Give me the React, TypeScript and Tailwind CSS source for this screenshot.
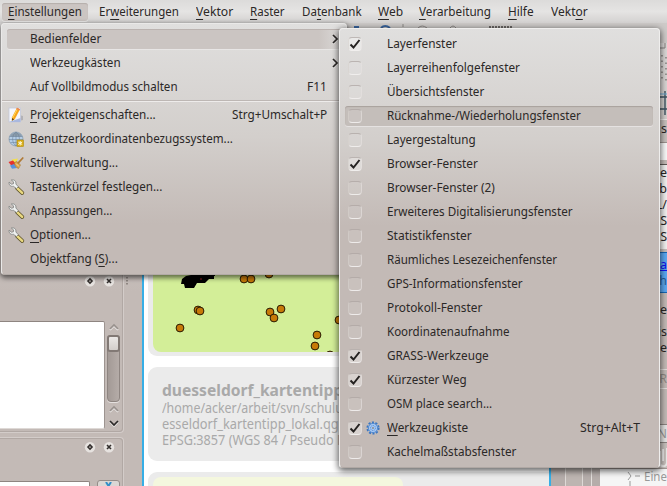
import { useLayoutEffect, useRef, type ReactNode } from "react";

const FONT = "font-['Noto_Sans','Open_Sans',sans-serif]";

/* Text squeezed horizontally to a given advance width. `&x` marks the mnemonic letter. */
function Fit({ text, w, className = "" }: { text: string; w: number; className?: string }) {
  const ref = useRef<HTMLSpanElement>(null);
  useLayoutEffect(() => {
    const apply = () => {
      const el = ref.current;
      if (el) el.style.transform = `scaleX(${w / el.offsetWidth})`;
    };
    apply();
    document.fonts.ready.then(apply);
  }, [w, text]);
  const i = text.indexOf("&");
  return (
    <span className="block shrink-0 whitespace-pre" style={{ width: w }}>
      <span ref={ref} className={`inline-block origin-left ${className}`}>
        {i < 0 ? (
          text
        ) : (
          <>
            {text.slice(0, i)}
            <span className="underline decoration-1 underline-offset-[3px] [text-decoration-skip-ink:none]">{text[i + 1]}</span>
            {text.slice(i + 2)}
          </>
        )}
      </span>
    </span>
  );
}

function NoteIcon() {
  return (
    <svg width="16" height="16" viewBox="0 0 16 16">
      <path d="M11 8l4 1v4l-4 1z" fill="#9d9da5" opacity=".6" />
      <rect x="1" y="1" width="11.5" height="14" fill="#f5f7fc" stroke="#c4c9da" strokeWidth=".8" />
      <path d="M1 15h11.5V11z" fill="#a9b8df" />
      <path d="M9 .8l3 1.4-5.2 10-2.9 1.5.1-3.4z" fill="#f8a51b" />
      <path d="M9.8 1.2l-5.3 10" stroke="#ffd95a" strokeWidth="1" />
      <path d="M9 .8l3 1.4-.7 1.3-3-1.4z" fill="#e8805c" />
      <path d="M4 11l-.2 2.8 2.4-1.3z" fill="#5b4320" />
    </svg>
  );
}

function GlobeIcon() {
  return (
    <svg width="16" height="16" viewBox="0 0 16 16">
      <circle cx="8" cy="8" r="7" fill="#b4cde6" stroke="#8196aa" strokeWidth=".7" />
      <path d="M1.5 5.5h13M1 8.5h14M2.5 11.5h11M8 1v14M8 1C3.500 4 3.500 12 8 15M8 1c4.500 3 4.500 11 0 14" fill="none" stroke="#6f879f" strokeWidth=".6" />
      <path d="M2 5.500Q3 2 8 1.500q5 .500 6 4z" fill="#6f7d88" opacity=".6" />
      <rect x="9" y="9" width="6.500" height="6.500" fill="#d8ac13" stroke="#b18c10" strokeWidth=".6" />
      <path d="M12.200 10v4.500M10.200 11l4 2.500M14.200 11l-4 2.500" stroke="#fff9db" strokeWidth="1" />
    </svg>
  );
}

function BrushIcon() {
  return (
    <svg width="16" height="16" viewBox="0 0 16 16">
      <path d="M4 4.500l6-1-3 6-4-1z" fill="#f4e04c" />
      <path d="M.5 7L5 5.500l3 3.500-4 2.500z" fill="#e5322e" />
      <path d="M2 10.500l4-1.500 3 4-5 .800z" fill="#5b92dc" />
      <path d="M6.500 7.500l2.500-1 3.500 3.500-2 3.500c-2-.5-4-3-4-6z" fill="#dba348" stroke="#a87b35" strokeWidth=".6" />
      <path d="M8 8.500l3 3" stroke="#f6dda0" />
      <path d="M10.300 7.800L14.800 3" stroke="#b07a35" strokeWidth="1.700" strokeLinecap="round" />
    </svg>
  );
}

function WrenchIcon() {
  return (
    <svg width="17" height="17" viewBox="0 0 17 17">
      <path d="M9 9l5.300 5" stroke="#5f542b" strokeWidth="3.800" strokeLinecap="round" />
      <path d="M9.200 9.100l5 4.800" stroke="#ead980" strokeWidth="2.400" strokeLinecap="round" />
      <path
        d="M1.100 3.100L3.400 5.200 5.400 4.800 5.600 2.900 3.300 1C6.200.2 8.400 2.200 7.900 5L10.300 7.700 8.400 9.600 5.300 7.200C3 8 .6 6 1.100 3.100z"
        fill="#f0f2f1" stroke="#7d807f" strokeWidth=".8"
      />
    </svg>
  );
}

function GearIcon() {
  return (
    <svg width="14" height="14" viewBox="0 0 14 14">
      <circle cx="7" cy="7" r="5.700" fill="none" stroke="#3c77c2" strokeWidth="1.800" strokeDasharray="2.100 1.481" />
      <circle cx="7" cy="7" r="4.600" fill="#a3c6f3" stroke="#4a86d0" strokeWidth=".9" />
      <circle cx="7" cy="7" r="2.500" fill="none" stroke="#4c86cd" strokeWidth=".8" strokeDasharray="1.200 .7" />
      <circle cx="7" cy="7" r="1" fill="#8b8c8e" />
    </svg>
  );
}

function Chevron({ d, light = false }: { d: "up" | "down" | "right"; light?: boolean }) {
  const path = d === "up" ? "M1 6l4-4 4 4" : d === "down" ? "M1 2l4 4 4-4" : "M3 0l4 4-4 4";
  return (
    <svg width="10" height="8" viewBox="0 0 10 8" className="overflow-visible">
      <path d={path} transform="translate(0 1)" fill="none" stroke="#efedec" strokeWidth="1.600" />
      <path d={path} fill="none" stroke={light ? "#98918d" : "#2b2827"} strokeWidth="1.700" />
    </svg>
  );
}

const bar: [string, number, number][] = [
  ["&Einstellungen", 74, 17],
  ["Er&weiterungen", 80, 17],
  ["&Vektor", 37, 17],
  ["&Raster", 35, 17],
  ["Da&tenbank", 60, 16],
  ["&Web", 25, 16],
  ["&Verarbeitung", 72, 17],
  ["&Hilfe", 25.500, 17],
  ["Vekt&or", 36.500, 0],
];

function MenuBar() {
  return (
    <div className="flex h-[23px] shrink-0 items-center bg-linear-to-b from-[#dcdbda] via-[#e5e4e3] to-[#d3d1d0] pl-[2px] text-[#2b2827]">
      {bar.map(([t, w, gap], i) => (
        <div
          key={i}
          className={i === 0 ? "h-[18px] rounded-[3px] bg-[#cbc5c2] px-[6px] shadow-[inset_0_1px_1px_#b5aeab,0_1px_0_#efeeed]" : "h-[18px]"}
          style={{ marginRight: i === 0 ? gap - 6 : gap }}
        >
          <Fit text={t} w={w} />
        </div>
      ))}
    </div>
  );
}

function MenuRow({ icon, label, w, keys, kw = 0, arrow, active }: {
  icon?: ReactNode; label: string; w: number; keys?: string; kw?: number; arrow?: boolean; active?: boolean;
}) {
  return (
    <div className="flex h-6 items-center pl-[5px]">
      <div
        className={`flex h-5 w-full items-center ${active ? "rounded-[3px] bg-linear-to-r from-[#cbc5c2] from-92% to-transparent shadow-[inset_0_1px_0_#bbb3b0,0_1px_0_#e8e6e5]" : ""}`}
      >
        <span className="flex w-[23px] shrink-0 items-center pl-px">{icon}</span>
        <Fit text={label} w={w} />
        {keys && <span className="mr-[19px] ml-auto"><Fit text={keys} w={kw} /></span>}
        {arrow && <span className="mr-[6px] ml-auto"><Chevron d="right" /></span>}
      </div>
    </div>
  );
}

function SettingsMenu() {
  return (
    <div className="absolute top-[23px] left-px h-[252px] w-[346px] rounded-[4px] border border-[#eae9e8] border-b-[#b2aaa6] bg-linear-to-b from-[#e0dfde] via-[#d3cfcc] via-45% to-[#c3bab6] to-80% pt-[3px] shadow-[0_2px_5px_1px_rgba(0,0,0,0.55)]">
      <MenuRow label="Bedienfelder" w={71} arrow active />
      <MenuRow label="Werkzeugkästen" w={91} arrow />
      <MenuRow label="Auf Vollbildmodus schalten" w={148} keys="F11" kw={20} />
      <div className="flex h-1 items-center">
        <div className="h-[2px] w-full border-t border-b border-t-[#bdb7b4] border-b-[#eeeceb]" />
      </div>
      <MenuRow icon={<NoteIcon />} label="&Projekteigenschaften..." w={126} keys="Strg+Umschalt+P" kw={95} />
      <MenuRow icon={<GlobeIcon />} label="Benutzerkoordinatenbezugssystem..." w={202.500} />
      <MenuRow icon={<BrushIcon />} label="Stilverwaltung..." w={88} />
      <MenuRow icon={<WrenchIcon />} label="Tastenkürzel festlegen..." w={132.500} />
      <MenuRow icon={<WrenchIcon />} label="Anpassungen..." w={82} />
      <MenuRow icon={<WrenchIcon />} label="&Optionen..." w={60.500} />
      <MenuRow label="Objektfang (&S)..." w={87.500} />
    </div>
  );
}

const panels: { t: string; w: number; on?: boolean; hot?: boolean; gear?: boolean }[] = [
  { t: "Layerfenster", w: 70, on: true },
  { t: "Layerreihenfolgefenster", w: 132.500 },
  { t: "Übersichtsfenster", w: 97 },
  { t: "Rücknahme-/Wiederholungsfenster", w: 193.500, hot: true },
  { t: "Layergestaltung", w: 88.500 },
  { t: "Browser-Fenster", w: 90.500, on: true },
  { t: "Browser-Fenster (2)", w: 107.500 },
  { t: "Erweiteres Digitalisierungsfenster", w: 186 },
  { t: "Statistikfenster", w: 84.500 },
  { t: "Räumliches Lesezeichenfenster", w: 170.500 },
  { t: "GPS-Informationsfenster", w: 135.500 },
  { t: "Protokoll-Fenster", w: 95.500 },
  { t: "Koordinatenaufnahme", w: 122.500 },
  { t: "GRASS-Werkzeuge", w: 101.500, on: true },
  { t: "Kürzester Weg", w: 80, on: true },
  { t: "OSM place search...", w: 105 },
  { t: "&Werkzeugkiste", w: 81, on: true, gear: true },
  { t: "Kachelmaßstabsfenster", w: 129 },
];

function CheckBox({ on }: { on?: boolean }) {
  return (
    <span className={`flex size-[14px] shrink-0 items-center justify-center rounded-[4px] border border-t-[#aaa3a0]/70 border-r-[#e5e2e0]/60 border-b-[#f2f0ef]/90 border-l-[#d5d0cd]/60 ${on ? "bg-white/35" : "bg-white/10"}`}>
      {on && (
        <svg width="12" height="12" viewBox="0 0 12 12" className="shrink-0">
          <path d="M1.500 6.500l3 3L10.500 2" fill="none" stroke="#252221" strokeWidth="2" />
        </svg>
      )}
    </span>
  );
}

function PanelsMenu() {
  return (
    <div className="absolute top-[28px] left-[339px] h-[440px] w-[321px] rounded-[4px] border border-[#efeeed] border-b-[#b0a8a4] bg-linear-to-b from-[#e0dfde] via-[#d3cfcc] via-25% to-[#c3bab6] to-45% pt-[3px] shadow-[0_2px_6px_1px_rgba(0,0,0,0.6)]">
      {panels.map((p) => (
        <div key={p.t} className="flex h-6 items-center px-[5px]">
          <div className={`flex h-5 w-[308px] items-center pl-[3px] ${p.hot ? "rounded-[3px] bg-[#c4beba] shadow-[inset_0_1px_1px_#a9a19d,0_1px_0_#e5e2e1]" : ""}`}>
            <CheckBox on={p.on} />
            <span className="flex w-[25px] shrink-0 items-center pl-[4px]">{p.gear && <GearIcon />}</span>
            <Fit text={p.t} w={p.w} />
            {p.gear && <span className="mr-[13px] ml-auto"><Fit text="Strg+Alt+T" w={60} /></span>}
          </div>
        </div>
      ))}
    </div>
  );
}

function DockButtons() {
  return (
    <div className="flex gap-[9px] pr-[9px]">
      {["M3 5l2-2 2 2-2 2z", "M3 3l4 4M7 3L3 7"].map((d) => (
        <svg key={d} width="10" height="10" viewBox="0 0 10 10" className="overflow-visible">
          <circle cx="5" cy="5.300" r="5.200" fill="#e6e2df" />
          <path d={d} fill="none" stroke="#332f2d" strokeWidth="1.600" />
        </svg>
      ))}
    </div>
  );
}

function LeftDock() {
  return (
    <div className="flex h-full w-[142px] shrink-0 flex-col">
      <div className="h-[410px] w-[124px] shrink-0 rounded-br-[4px] border-r border-b border-[#d3ccc9] shadow-[inset_-1px_-1px_0_#b1a8a4]">
        <div className="flex h-[298px] items-end justify-end pb-[35px]"><DockButtons /></div>
        <div className="flex h-[108px]">
          <div className="w-[105px] rounded-r-[2px] border-t border-r border-b border-t-[#8e8581] border-r-[#9d9490] border-b-[#ded9d6] bg-white" />
          <div className="ml-[2px] flex w-[13px] flex-col items-center">
            <div className="flex h-[14px] items-center pb-[2px]"><Chevron d="up" light /></div>
            <div className="h-[67px] w-[13px] rounded-[4px] border border-[#8e8581] bg-linear-to-r from-[#a39a96] to-[#b5acA8] shadow-[0_1px_0_#e5e1df]">
              <div className="-m-px h-[17px] w-[13px] rounded-[3px] border-2 border-[#827975] bg-linear-to-b from-[#ebe8e6] to-[#d3cecb]" />
            </div>
            <div className="flex h-[14px] items-center"><Chevron d="up" light /></div>
            <div className="flex h-[13px] items-center"><Chevron d="down" /></div>
          </div>
        </div>
      </div>
      <div className="mt-[4px] flex h-[60px] w-[124px] shrink-0 flex-col rounded-tr-[4px] border-t border-r border-[#d3ccc9] shadow-[inset_-1px_1px_0_#b1a8a4]">
        <div className="flex h-[42px] justify-end pt-[4px]"><DockButtons /></div>
        <div className="flex justify-between pr-[3px]">
          <div className="mt-px h-2 w-[90px] rounded-tr-[2px] border-t border-r border-[#8e8581] bg-white" />
          <div className="flex h-3 w-[23px] justify-center rounded-t-[3px] border border-[#958c88] bg-[#dbd7d4] pt-px">
            <svg width="7" height="6"><path d="M1 0l2.500 4L6 0" fill="none" stroke="#348fc8" strokeWidth="2" /></svg>
          </div>
        </div>
      </div>
    </div>
  );
}

/* Points of interest on the map thumbnail */
const dots = [[27, 64], [45, 46], [47, 47], [91, 15], [98, 15], [116, 10], [117, 48], [121, 54], [128, 45], [164, 71], [162, 82], [177, 91], [186, 56]];

function Center() {
  return (
    <div className="flex h-full w-[409px] shrink-0 flex-col overflow-hidden border-r-2 border-l-2 border-[#36aee6] bg-white pl-[4px]">
      <div className="h-[333px] shrink-0 rounded-l-[9px] bg-[#ebebeb] pt-[241px] pl-[5px]">
        <svg width="250" height="88" viewBox="0 0 250 88" className="rounded-bl-[8px] bg-[#d3ee98]">
          {dots.map(([x, y]) => (
            <circle key={`${x}-${y}`} cx={x} cy={y} r="3.900" fill="#c77a08" stroke="#271b05" strokeWidth="1" />
          ))}
          <path d="M29 15l4-3 5-1V9h24v3h-1v3h-5l-4 4h-8l-3 5h-9l-1-4h-3z" fill="#000" />
          <path d="M47 15h2" stroke="#972323" />
        </svg>
      </div>
      <div className="mt-[11px] h-[94px] shrink-0 rounded-l-[9px] bg-[#ebebeb] pt-[14px] pl-[14px] text-[13.5px] leading-4 text-[#a9a9a9]">
        <div className="h-[19px] leading-[19px]"><Fit text="duesseldorf_kartentipp" w={181} className="text-[15.5px] font-bold" /></div>
        <Fit text="/home/acker/arbeit/svn/schulu" w={181} />
        <Fit text="esseldorf_kartentipp_lokal.qg" w={177} />
        <Fit text="EPSG:3857 (WGS 84 / Pseudo M" w={186} />
      </div>
      <div className="mt-[11px] h-8 shrink-0 rounded-l-[9px] bg-[#ebebeb] pt-[5px] pl-[5px]">
        <div className="h-8 w-[250px] rounded-t-[8px] bg-[#f4f7de]" />
      </div>
    </div>
  );
}

function Frag({ children, className }: { children: string; className: string }) {
  return <div className={`flex shrink-0 items-center justify-end overflow-hidden whitespace-pre ${className}`}>{children}</div>;
}

function RightDock() {
  return (
    <div className="flex h-full min-w-0 flex-1">
      <div className="flex w-[49px] shrink-0 bg-[#b5adaa]">
        <div className="ml-[14px] w-[18px] border-x border-[#ded9d6] bg-[#bdb5b1]" />
        <div className="ml-[8px] w-px bg-[#e3dfdc]" />
      </div>
      <div className="flex min-w-0 flex-1 flex-col text-[#292625]">
        <svg width="67" height="96" className="shrink-0 self-end">
          <path d="M58 5h7v20h-7M58 9l5 5-5 6" fill="none" stroke="#858280" />
          <path d="M62 32v26M66 34v24" stroke="#85807d" strokeWidth="1.500" strokeDasharray="1.500 4" />
          <path d="M60 74h7M60 86h7M65 68v24" stroke="#3e5361" strokeWidth="1.400" />
          <path d="M60 71h7" stroke="#6aa6cf" />
        </svg>
        <Frag className="h-[23px] border-t border-[#eceae8] bg-[#c7c0bc] pb-1">s</Frag>
        <div className="h-[18px] shrink-0 border-t border-[#9d9490] bg-[#f8f8f8]" />
        <div className="h-[5px] shrink-0 border-b border-[#5e5754] bg-[#c4bbb7]" />
        <div className="h-[84px] shrink-0 bg-[#f1f0ef] text-right leading-4">
          <div>e</div><div>b</div><div>L/</div><div>SS</div><div>SS</div>
        </div>
        <div className="mt-[3px] h-[41px] shrink-0 border-y border-[#1766b4] bg-[#5ba7f1] pt-[4px] text-right leading-4">
          <div className="text-[#1111ee] underline">na</div>
          <div className="text-[#245c99]">h</div>
        </div>
        <div className="mt-[9px] h-[67px] shrink-0 text-right leading-4">
          <div>ze</div><div className="mt-[6px]">is</div><div>ne</div>
        </div>
        <Frag className="h-[20px] border-y border-[#e4e0de] text-[#928b87]">R</Frag>
        <div className="h-[35px] shrink-0" />
        <Frag className="h-[19px] border-y border-[#8c8480] bg-[#e5e4e3] text-[#999]">-N</Frag>
        <div className="h-[26px] shrink-0 border-b border-[#a29995] bg-[#c7c0bc] pl-[59px] pt-[3px]">
          <svg width="8" height="22"><path d="M1 5v14q6 3 7-2V2M4 15V3" fill="none" stroke="#eceae9" strokeWidth="2" /></svg>
        </div>
        <div className="flex min-h-0 flex-1 items-start bg-[#f5f5f5] pl-[27px] leading-4 text-[#999]">
          <svg width="17" height="20" className="shrink-0"><path d="M1 3l3 4-3 4M8 7h5M3 12v8" fill="none" stroke="#999" /></svg>
          <Fit text="Eine" w={23} />
        </div>
      </div>
    </div>
  );
}

export default function App() {
  return (
    <div className={`relative flex h-[486px] w-[667px] flex-col overflow-hidden bg-linear-to-b from-[#dfdedd] to-[#c3bab6] to-60% text-[12.5px] leading-[18px] text-[#2b2827] ${FONT}`}>
      <MenuBar />
      <div className="flex min-h-0 flex-1">
        <LeftDock />
        <Center />
        <RightDock />
      </div>
      <div className="absolute top-[23px] left-[142px] flex h-[20px] w-[525px] bg-[#cdcac8] pl-[209px]">
        <svg width="220" height="5">
          <path d="M3 4h5M30 5q4-4 9 0" stroke="#3a659e" strokeWidth="2" fill="none" />
          <path d="M52 1v3M67 5q4-4 9 0M99 5q3-4 6 0" stroke="#8b8784" fill="none" />
          <path d="M138 4h23" stroke="#6a6664" strokeWidth="2" strokeDasharray="2 1" />
        </svg>
      </div>
      <svg className="absolute top-[277px] left-[125px]" width="4" height="10">
        <path d="M2 0v9" stroke="#7e7571" strokeWidth="1.500" strokeDasharray="1.500 1.500" />
      </svg>
      <SettingsMenu />
      <PanelsMenu />
    </div>
  );
}
